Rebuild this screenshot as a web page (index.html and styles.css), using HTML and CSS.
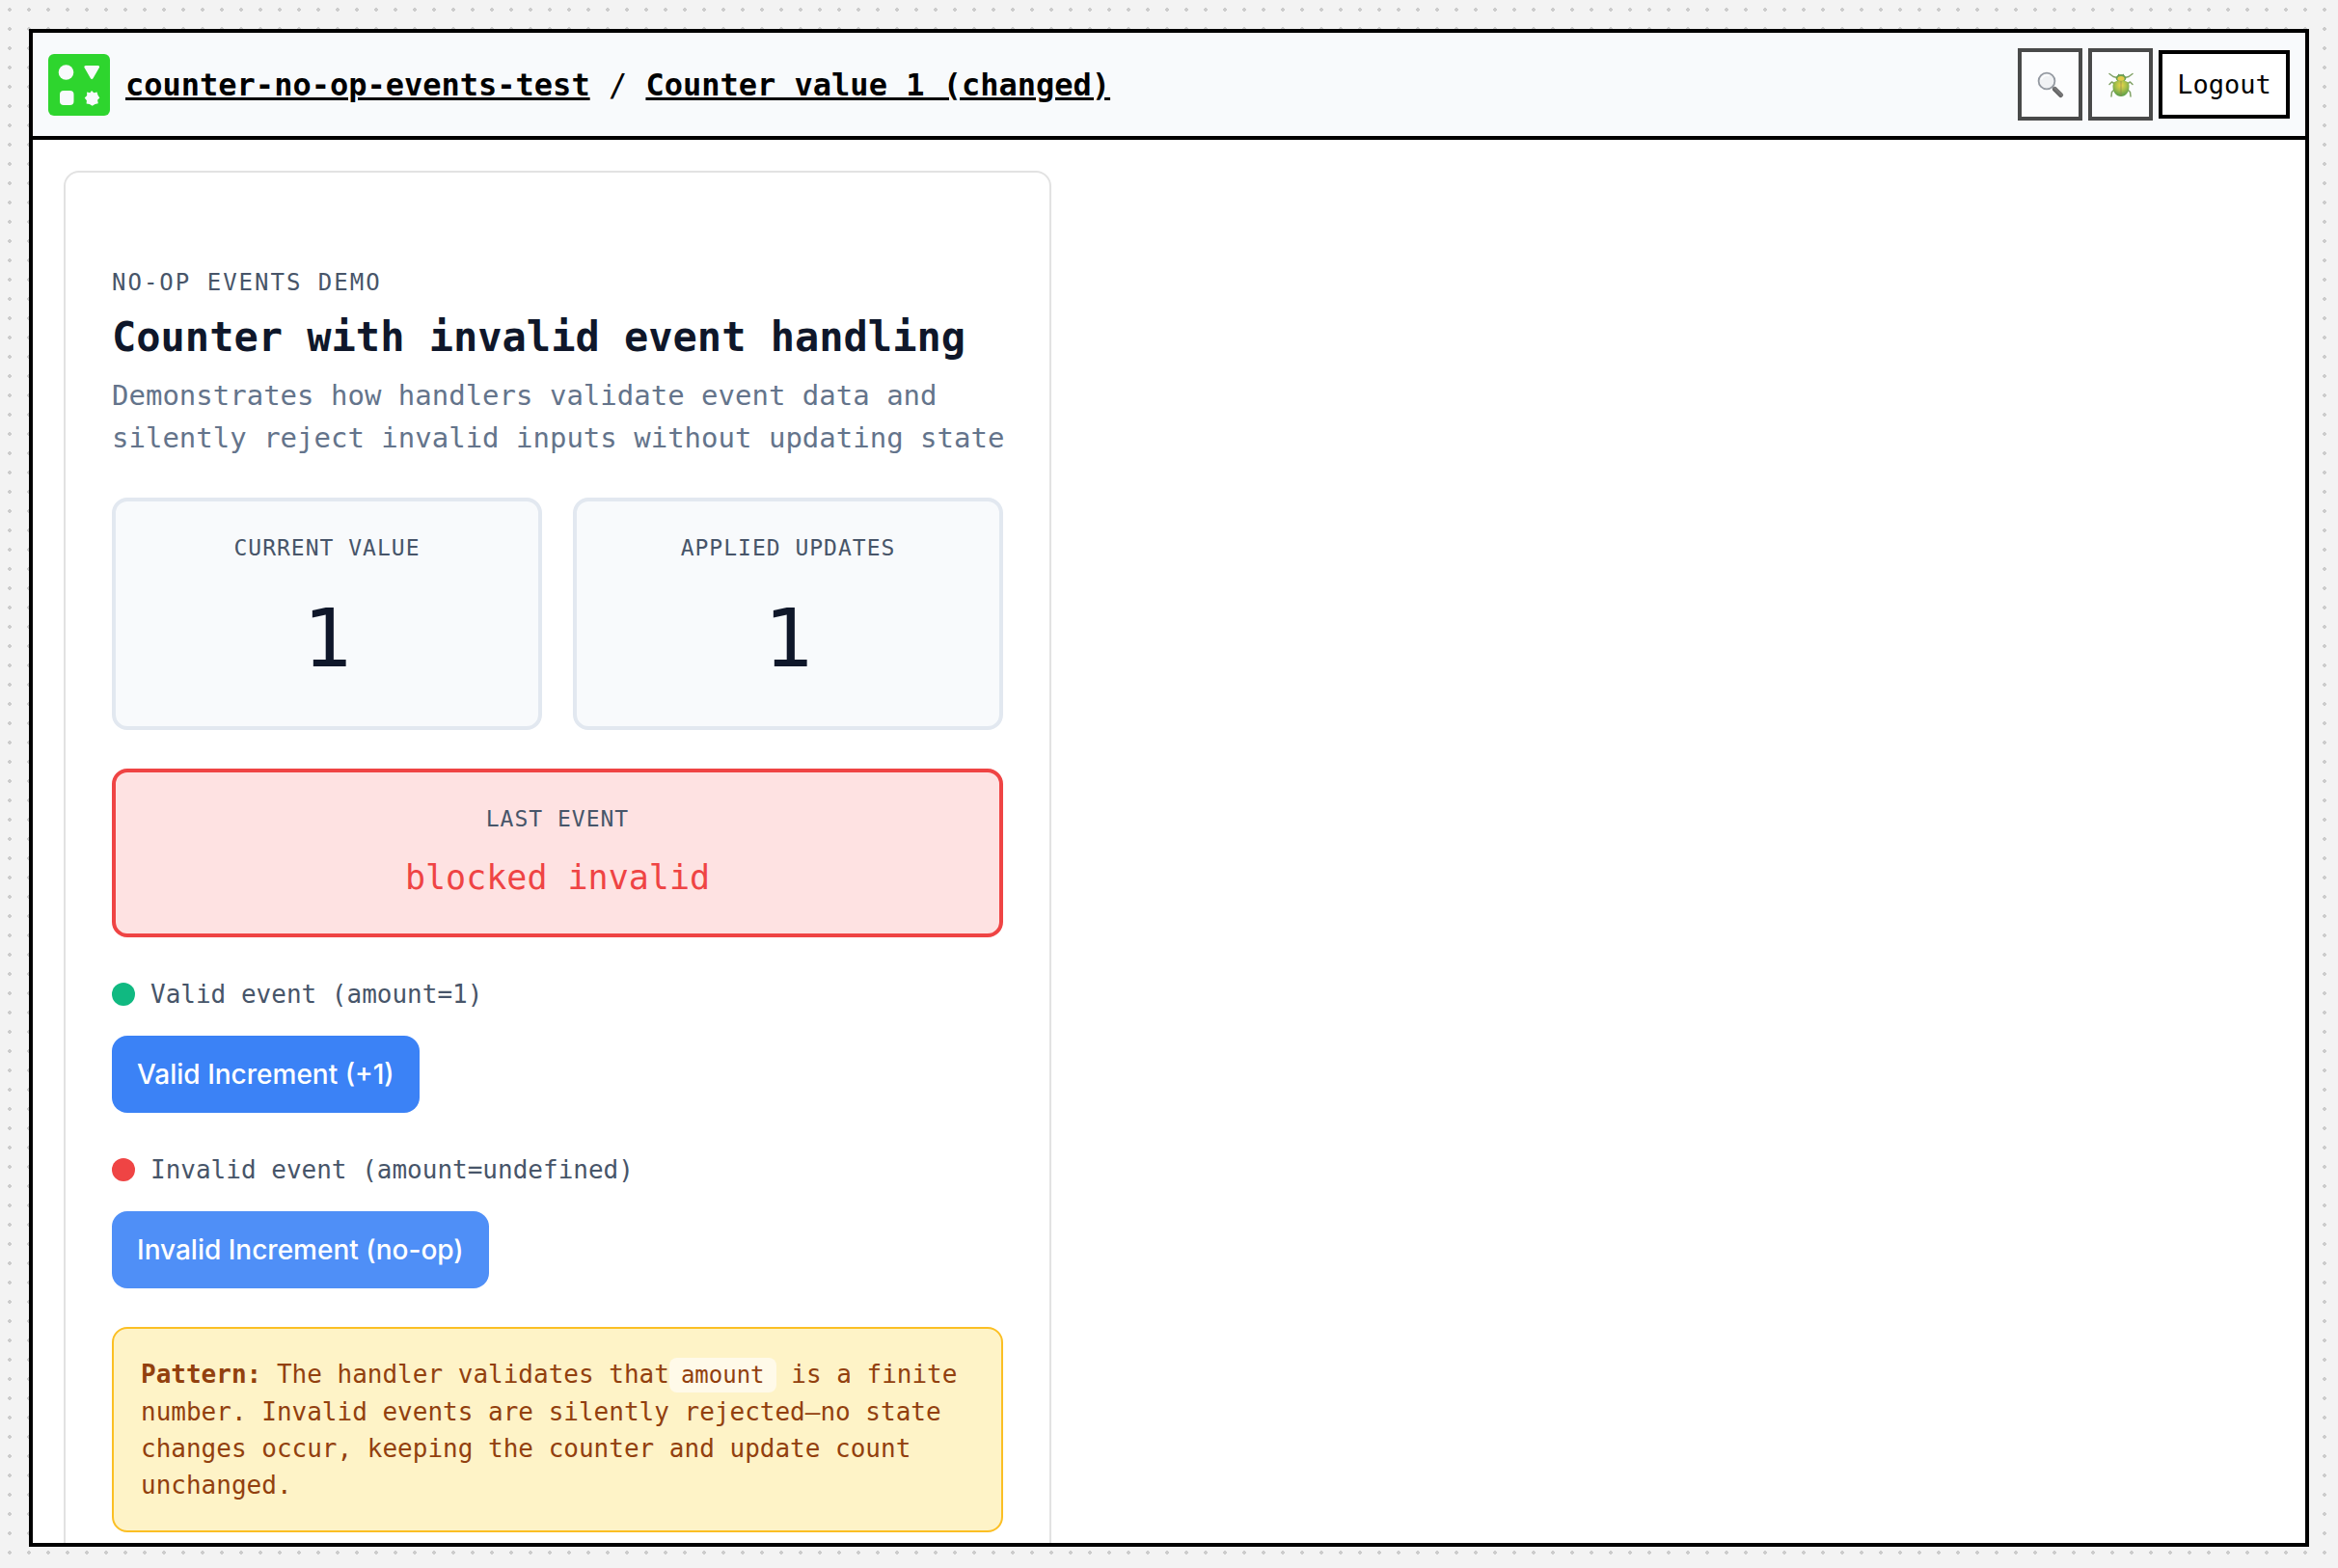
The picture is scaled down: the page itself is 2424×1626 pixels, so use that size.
FILE: index.html
```html
<!DOCTYPE html>
<html lang="en">
<head>
<meta charset="utf-8">
<meta name="viewport" content="width=device-width, initial-scale=1">
<title>Counter value 1 (changed)</title>
<link rel="stylesheet" href="styles.css">
</head>
<body>
<div class="frame">
  <header class="topbar">
    <svg class="logo" viewBox="0 0 64 64" aria-hidden="true">
      <rect width="64" height="64" rx="6" fill="#2ed52e"/>
      <g fill="#f8fafc">
        <circle cx="18.500" cy="19" r="7.800"/>
        <path d="M39 12h12.500c1.500 0 2 1.200 1.300 2.300l-6.300 11c-.7 1.100-2 1.100-2.600 0l-6.300-11c-.7-1.100-.1-2.300 1.400-2.300z"/>
        <rect x="12" y="38" width="14.500" height="15" rx="4"/>
        <path d="M45 38l2.300 2.200 3.300-.8.800 3.200 1.900 2.900-2.200 2.300.7 3.400-3.200.7-2.900 1.800-2.900-1.800-3.200-.3.300-3.400-2.200-2.600 2.500-2.500-.1-3.700 3.200.8z"/>
      </g>
    </svg>
    <h1 class="crumbs"><a class="crumb" href="#project">counter-no-op-events-test</a> / <a class="crumb" href="#page">Counter value 1 (changed)</a></h1>
    <nav class="actions">
      <button class="tool" type="button" aria-label="Search">
        <svg class="tool-icon" viewBox="0 0 28 28" aria-hidden="true">
          <defs><linearGradient id="handle" x1="0" y1="1" x2="1" y2="0"><stop offset="0" stop-color="#000"/><stop offset=".6" stop-color="#444"/><stop offset="1" stop-color="#111"/></linearGradient></defs>
          <path d="M15.500 15.500l3 3" stroke="#777" stroke-width="2.500"/>
          <path d="M18.500 18.500l6 6" stroke="url(#handle)" stroke-width="5" stroke-linecap="round"/>
          <circle cx="10" cy="10" r="8.400" fill="#eef0f2" stroke="#6b727c" stroke-width="1.800"/>
          <path d="M4.500 8.500a6 6 0 0 1 8-4" fill="none" stroke="#fff" stroke-width="1.500"/>
        </svg>
      </button>
      <button class="tool" type="button" aria-label="Debug">
        <svg class="tool-icon" viewBox="0 0 28 28" aria-hidden="true">
          <defs><radialGradient id="shell" cx=".5" cy=".3" r=".65"><stop offset="0" stop-color="#e8c800"/><stop offset=".45" stop-color="#93ac00"/><stop offset="1" stop-color="#1f7a00"/></radialGradient></defs>
          <g fill="none" stroke="#4f7d28" stroke-width="1.500" stroke-linecap="round" stroke-linejoin="round">
            <path d="M10 6.500L6 5.500 2 2.500M18 6.500l4-1 4-3"/>
            <path d="M7 12.500L4.500 11 2 13.500M21 12.500l2.500-1.500 2.500 2.500"/>
            <path d="M6.500 19.500L4.500 21.500 4 26M21.500 19.500l2 2 .5 4.500"/>
          </g>
          <path d="M10.500 4.500l1-2 1 1h3l1-1 1 2z" fill="#1f5a10"/>
          <ellipse cx="14" cy="7.200" rx="5.200" ry="4" fill="#2f7a0a"/>
          <ellipse cx="14" cy="7.500" rx="3.600" ry="2.600" fill="#dcb800"/>
          <path d="M5.500 15.500c0-4.500 3-6 8.500-6s8.500 1.500 8.500 6c0 6-3.500 10.500-8.500 10.500s-8.500-4.500-8.500-10.500z" fill="url(#shell)"/>
          <path d="M14 10v15.500" stroke="#6b5a00" stroke-width=".8"/>
        </svg>
      </button>
      <button class="logout" type="button">Logout</button>
    </nav>
  </header>
  <main class="content">
    <section class="card">
      <div class="intro">
        <p class="eyebrow">NO-OP EVENTS DEMO</p>
        <h2 class="title">Counter with invalid event handling</h2>
        <p class="lead">Demonstrates how handlers validate event data and<br>silently reject invalid inputs without updating state</p>
      </div>
      <div class="stats">
        <div class="stat"><span class="label">CURRENT VALUE</span><span class="number">1</span></div>
        <div class="stat"><span class="label">APPLIED UPDATES</span><span class="number">1</span></div>
      </div>
      <div class="stat stat-error"><span class="label">LAST EVENT</span><span class="status">blocked invalid</span></div>
      <div class="events">
        <div class="event">
          <p class="event-name"><span class="dot dot-valid"></span>Valid event (amount=1)</p>
          <button class="action" type="button">Valid Increment (+1)</button>
        </div>
        <div class="event">
          <p class="event-name"><span class="dot dot-invalid"></span>Invalid event (amount=undefined)</p>
          <button class="action action-soft" type="button">Invalid Increment (no-op)</button>
        </div>
      </div>
      <p class="note"><strong>Pattern:</strong> The handler validates that<code class="code">amount</code> is a finite number. Invalid events are silently rejected—no state changes occur, keeping the counter and update count unchanged.</p>
    </section>
  </main>
</div>
</body>
</html>
```
FILE: styles.css
```css
* {
  box-sizing: border-box;
}

body {
  margin: 0;
  height: 100vh;
  padding: 30px 30px 22px;
  background: #f3f3f3 radial-gradient(circle at 10px 10px, #ccc 2px, transparent 2px) 0 0 / 20px 20px;
  color: #000;
  font-family: "DejaVu Sans Mono", "Liberation Mono", monospace;
}

h1, h2, p {
  margin: 0;
}

.frame {
  display: flex;
  flex-direction: column;
  height: 100%;
  border: 4px solid #000;
  background: #fff;
  overflow: hidden;
}

.topbar {
  display: flex;
  align-items: center;
  gap: 16px;
  flex: none;
  padding: 16px;
  border-bottom: 4px solid #000;
  background: #f8fafc;
}

.logo {
  width: 64px;
  height: 64px;
}

.crumbs {
  flex: 1;
  font-size: 32px;
  line-height: 40px;
  font-weight: 400;
}

.crumb {
  color: inherit;
  font-weight: 700;
  text-decoration-thickness: 3px;
}

.actions {
  display: flex;
  align-items: center;
  gap: 6px;
}

.tool {
  display: flex;
  align-items: center;
  justify-content: center;
  width: 67px;
  height: 75px;
  padding: 0;
  border: 4px solid #000;
  background: #fff;
  opacity: 0.7;
}

.tool-icon {
  width: 28px;
  height: 28px;
}

.logout {
  width: 136px;
  height: 71px;
  padding: 0;
  border: 4px solid #000;
  background: #fff;
  color: #000;
  font-family: inherit;
  font-size: 27px;
}

.content {
  flex: 1;
  min-height: 0;
  padding: 32px;
  overflow: hidden;
}

.card {
  display: flex;
  flex-direction: column;
  gap: 40px;
  max-width: 1024px;
  padding: 96px 48px 48px;
  border: 2px solid #e2e2e2;
  border-radius: 16px;
}

.intro {
  display: flex;
  flex-direction: column;
  gap: 8px;
}

.eyebrow {
  color: #475569;
  font-size: 24px;
  line-height: 37px;
  letter-spacing: 2px;
}

.title {
  color: #0f172a;
  font-size: 42px;
  line-height: 60px;
}

.lead {
  color: #64748b;
  font-size: 29px;
  line-height: 44px;
  white-space: nowrap;
}

.stats {
  display: grid;
  grid-template-columns: 1fr 1fr;
  gap: 32px;
}

.stat {
  display: flex;
  flex-direction: column;
  align-items: center;
  gap: 14px;
  padding: 30px 28px 28px;
  border: 4px solid #e2e8f0;
  border-radius: 16px;
  background: #f8fafc;
}

.stat-error {
  border-color: #ef4444;
  background: #fee2e2;
}

.label {
  color: #475569;
  font-size: 23px;
  line-height: 36px;
  letter-spacing: 1px;
}

.number {
  color: #0f172a;
  font-size: 84px;
  line-height: 125px;
}

.status {
  color: #ef4444;
  font-size: 35px;
  line-height: 59px;
}

.events {
  display: flex;
  flex-direction: column;
  gap: 40px;
}

.event {
  display: flex;
  flex-direction: column;
  align-items: flex-start;
  gap: 24px;
}

.event-name {
  display: flex;
  align-items: center;
  gap: 16px;
  color: #475569;
  font-size: 26px;
  line-height: 38px;
}

.dot {
  width: 24px;
  height: 24px;
  border-radius: 50%;
}

.dot-valid {
  background: #10b981;
}

.dot-invalid {
  background: #ef4444;
}

.action {
  padding: 20px 26px;
  border: 0;
  border-radius: 16px;
  background: #3b82f6;
  color: #fff;
  font-family: Inter, sans-serif;
  font-size: 28px;
  line-height: 40px;
  font-weight: 500;
}

.action-soft {
  background: #4f8ff7;
}

.note {
  padding: 28px;
  border: 2px solid #fbbf24;
  border-radius: 16px;
  background: #fef3c7;
  color: #92400e;
  font-size: 26px;
  line-height: 38px;
}

.code {
  padding: 4px 12px;
  border-radius: 8px;
  background: rgba(255, 255, 255, 0.6);
  font-family: inherit;
  font-size: 24px;
}
```
